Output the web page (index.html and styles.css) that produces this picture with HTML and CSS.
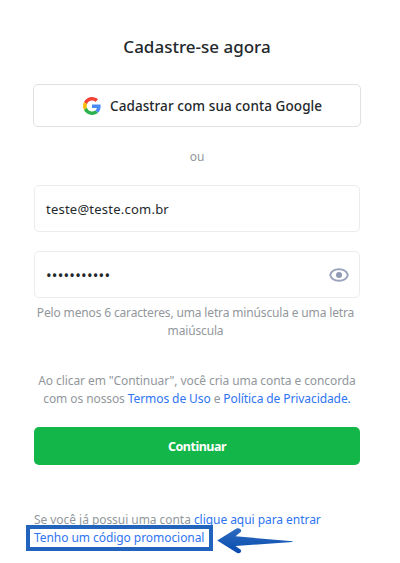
FILE: index.html
```html
<!DOCTYPE html>
<html lang="pt-BR">
<head>
  <meta charset="UTF-8">
  <meta name="viewport" content="width=device-width, initial-scale=1.0">
  <title>Cadastre-se agora</title>
  <link rel="stylesheet" href="styles.css">
</head>
<body>
<main class="signup">
  <h1 class="title">Cadastre-se agora</h1>

  <button type="button" class="google-btn">
    <svg width="18" height="18" viewBox="0 0 48 48">
      <path fill="#f44336" d="M24 9.5c3.54 0 6.71 1.22 9.21 3.6l6.85-6.85C35.9 2.38 30.47 0 24 0 14.62 0 6.51 5.38 2.56 13.22l7.98 6.19C12.43 13.72 17.74 9.5 24 9.5z"/>
      <path fill="#4a8af5" d="M46.98 24.55c0-1.57-.15-3.09-.38-4.55H24v9.02h12.94c-.58 2.96-2.26 5.48-4.78 7.18l7.73 6c4.51-4.18 7.09-10.36 7.09-17.65z"/>
      <path fill="#fbbc05" d="M10.53 28.59A14.5 14.5 0 0 1 9.77 24c0-1.6.27-3.14.76-4.59l-7.98-6.19A23.9 23.9 0 0 0 0 24c0 3.88.92 7.54 2.56 10.78z"/>
      <path fill="#2bb24c" d="M24 48c6.48 0 11.93-2.13 15.89-5.81l-7.73-6c-2.15 1.45-4.92 2.3-8.16 2.3-6.26 0-11.57-4.22-13.47-9.91l-7.98 6.19C6.51 42.62 14.62 48 24 48z"/>
    </svg>
    <span>Cadastrar com sua conta Google</span>
  </button>

  <div class="divider">ou</div>

  <form class="form">
    <input class="field" type="text" value="teste@teste.com.br">
    <div class="field password">
      <span class="dots">•••••••••••</span>
      <svg width="20" height="14" viewBox="0 0 20 14">
        <path d="M1.200 7C2.200 3.300 5.800 1.200 10 1.200S17.800 3.300 18.800 7c-1 3.700-4.600 5.800-8.800 5.800S2.200 10.700 1.200 7z" fill="none" stroke="#9aa3ba" stroke-width="1.900"/>
        <circle cx="10" cy="7" r="3" fill="#8f99b3"/>
      </svg>
    </div>
    <p class="hint">Pelo menos 6 caracteres, uma letra minúscula e uma letra<br>maiúscula</p>
    <p class="terms">Ao clicar em "Continuar", você cria uma conta e concorda<br>com os nossos <a href="#">Termos de Uso</a> e <a href="#">Política de Privacidade.</a></p>
    <button type="button" class="submit">Continuar</button>
  </form>

  <div class="footer">
    <p class="login">Se você já possui uma conta <a href="#">clique aqui para entrar</a></p>
    <p class="promo">
      <a href="#">Tenho um código promocional</a>
      <svg class="arrow" width="78" height="28" viewBox="0 0 78 28">
        <defs>
          <linearGradient id="blue" x1="0" y1="0" x2="0" y2="1">
            <stop offset="0" stop-color="#2f6cc0"/>
            <stop offset="1" stop-color="#084cae"/>
          </linearGradient>
        </defs>
        <path fill="url(#blue)" d="M1.200 13.500 20.500 1.500C23.500 .2 26.300 2.800 24.700 5L19.500 9.300 76.500 14.200V15L19.500 18.900 24.500 22.500C26.300 24.800 23.800 27.400 20.800 25.800z"/>
      </svg>
    </p>
  </div>
</main>
</body>
</html>
```
FILE: styles.css
```css
* {
  box-sizing: border-box;
}
body {
  margin: 0;
  background: #fff;
  font-family: "Noto Sans", sans-serif;
  font-size: 12px;
  color: #92979c;
}
p {
  margin: 0;
}
a {
  color: #2f74f2;
  text-decoration: none;
}
.signup {
  width: 326px;
  margin-left: 34px;
  padding-top: 35px;
}
.title {
  margin: 0;
  height: 24px;
  font-size: 17px;
  line-height: 24px;
  font-weight: 500;
  color: #23282c;
  text-align: center;
  white-space: nowrap;
}
.google-btn {
  display: flex;
  align-items: center;
  gap: 9px;
  width: 328px;
  height: 43px;
  margin: 25px -1px 0;
  padding: 0 0 0 49px;
  background: #fff;
  border: 1px solid #dfe1e5;
  border-radius: 5px;
  font-family: inherit;
  font-size: 13.5px;
  font-weight: 500;
  letter-spacing: 0.08px;
  color: #23282c;
  white-space: nowrap;
}
.divider {
  height: 18px;
  margin-top: 21px;
  line-height: 18px;
  text-align: center;
}
.form {
  margin-top: 19px;
}
.field {
  display: block;
  width: 100%;
  height: 47px;
  padding: 0 11px;
  background: #fff;
  border: 1px solid #ececec;
  border-radius: 5px;
  font-family: inherit;
  font-size: 13px;
  letter-spacing: 0.23px;
  color: #23282c;
}
.password {
  display: flex;
  align-items: center;
  justify-content: space-between;
  margin-top: 19px;
  padding-right: 10px;
}
.dots {
  padding-top: 1px;
  font-size: 15px;
  letter-spacing: 0.2px;
}
.hint {
  margin: 6px 3px 0 0;
  line-height: 18px;
  letter-spacing: -0.15px;
  text-align: center;
  white-space: nowrap;
}
.terms {
  margin-top: 32px;
  line-height: 18px;
  letter-spacing: -0.09px;
  text-align: center;
  white-space: nowrap;
}
.submit {
  display: block;
  width: 100%;
  height: 38px;
  margin-top: 19px;
  background: #12b649;
  border: none;
  border-radius: 5px;
  font-family: inherit;
  font-size: 12.5px;
  font-weight: 700;
  letter-spacing: -0.5px;
  color: #fff;
}
.footer {
  margin-top: 46px;
  white-space: nowrap;
}
.login {
  height: 14px;
  line-height: 18px;
  letter-spacing: -0.05px;
}
/* highlighted link with the arrow pointing at it */
.promo {
  display: flex;
  align-items: flex-start;
  gap: 3px;
  margin-left: -8px;
  letter-spacing: -0.06px;
}
.promo a {
  width: 187px;
  height: 26px;
  background: #fff;
  border: 4px solid #2163bd;
  padding-left: 4px;
  line-height: 17px;
}
.arrow {
  margin-top: 2px;
}
```
